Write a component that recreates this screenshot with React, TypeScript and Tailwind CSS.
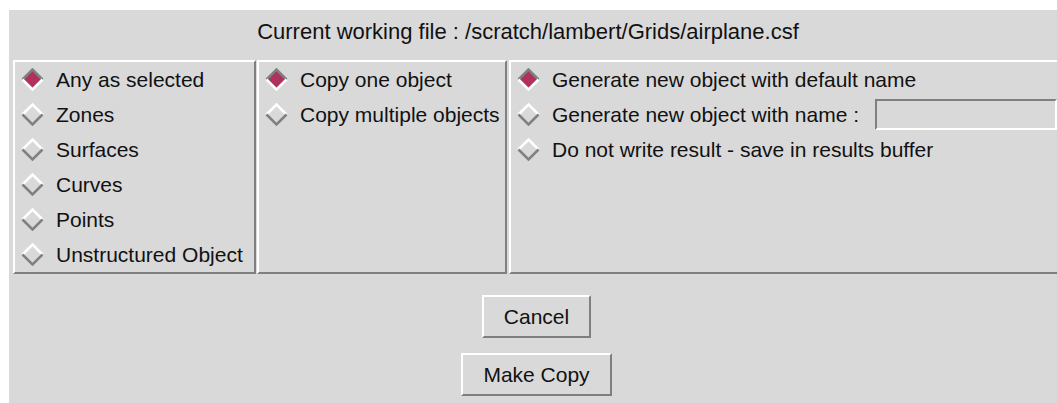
import React, { useState } from "react";

// Motif-style "copy object" dialog
const raised =
  "border-2 border-t-white border-l-white border-b-[#7f7f7f] border-r-[#7f7f7f]";
const sunken =
  "border-2 border-t-[#7f7f7f] border-l-[#7f7f7f] border-b-white border-r-white";

function Diamond({ on }: { on: boolean }) {
  const dark = "#808080";
  const light = "#ffffff";
  return (
    <svg width="23" height="23" viewBox="0 0 23 23" className="shrink-0">
      <polygon points="11.5,1.5 21.5,11.5 11.5,21.5 1.5,11.5" fill={on ? "#b03060" : "#d9d9d9"} />
      <polyline
        points="1.5,11.5 11.5,1.5 21.5,11.5"
        fill="none"
        stroke={on ? dark : light}
        strokeWidth="2.5"
      />
      <polyline
        points="1.5,11.5 11.5,21.5 21.5,11.5"
        fill="none"
        stroke={on ? light : dark}
        strokeWidth="2.5"
      />
    </svg>
  );
}

function Radio({
  label,
  on,
  onPick,
  children,
}: {
  label: string;
  on: boolean;
  onPick: () => void;
  children?: React.ReactNode;
}) {
  return (
    <div className="flex h-[35px] items-center pl-[6px]">
      <button className="flex items-center gap-[12px]" onClick={onPick}>
        <Diamond on={on} />
        <span className="whitespace-nowrap">{label}</span>
      </button>
      {children}
    </div>
  );
}

export default function App() {
  const kinds = ["Any as selected", "Zones", "Surfaces", "Curves", "Points", "Unstructured Object"];
  const modes = ["Copy one object", "Copy multiple objects"];
  const outs = [
    "Generate new object with default name",
    "Generate new object with name :",
    "Do not write result - save in results buffer",
  ];
  const [kind, setKind] = useState(0);
  const [mode, setMode] = useState(0);
  const [out, setOut] = useState(0);
  const [name, setName] = useState("");

  return (
    <div
      className="h-[403px] w-[1057px] overflow-hidden bg-white pl-[9px] pt-[10px] text-[21px] text-[#111]"
      style={{ fontFamily: '"Liberation Sans", Arial, sans-serif' }}
    >
      <div className="flex h-[393px] w-[1055px] flex-col bg-[#d9d9d9]">
        <div className="flex h-[50px] items-center justify-center pb-[8px] pr-[17px] text-[22px]">
          Current working file : /scratch/lambert/Grids/airplane.csf
        </div>

        <div className="ml-[4px] flex h-[214px]">
          <div className={`w-[243px] ${raised}`}>
            {kinds.map((k, i) => (
              <Radio key={k} label={k} on={kind === i} onPick={() => setKind(i)} />
            ))}
          </div>
          <div className={`ml-[1px] w-[250px] ${raised}`}>
            {modes.map((m, i) => (
              <Radio key={m} label={m} on={mode === i} onPick={() => setMode(i)} />
            ))}
          </div>
          <div className={`ml-[2px] flex-1 ${raised}`}>
            {outs.map((o, i) => (
              <Radio key={o} label={o} on={out === i} onPick={() => setOut(i)}>
                {i === 1 && (
                  <input
                    className={`ml-[16px] h-[31px] w-[182px] bg-[#d9d9d9] px-1 outline-none ${sunken}`}
                    value={name}
                    onChange={(e) => setName(e.target.value)}
                  />
                )}
              </Radio>
            ))}
          </div>
        </div>

        <div className="mt-[21px] flex flex-col items-center gap-[15px]">
          <button className={`h-[43px] w-[109px] ${raised}`}>Cancel</button>
          <button className={`h-[43px] w-[151px] ${raised}`}>Make Copy</button>
        </div>
      </div>
    </div>
  );
}
